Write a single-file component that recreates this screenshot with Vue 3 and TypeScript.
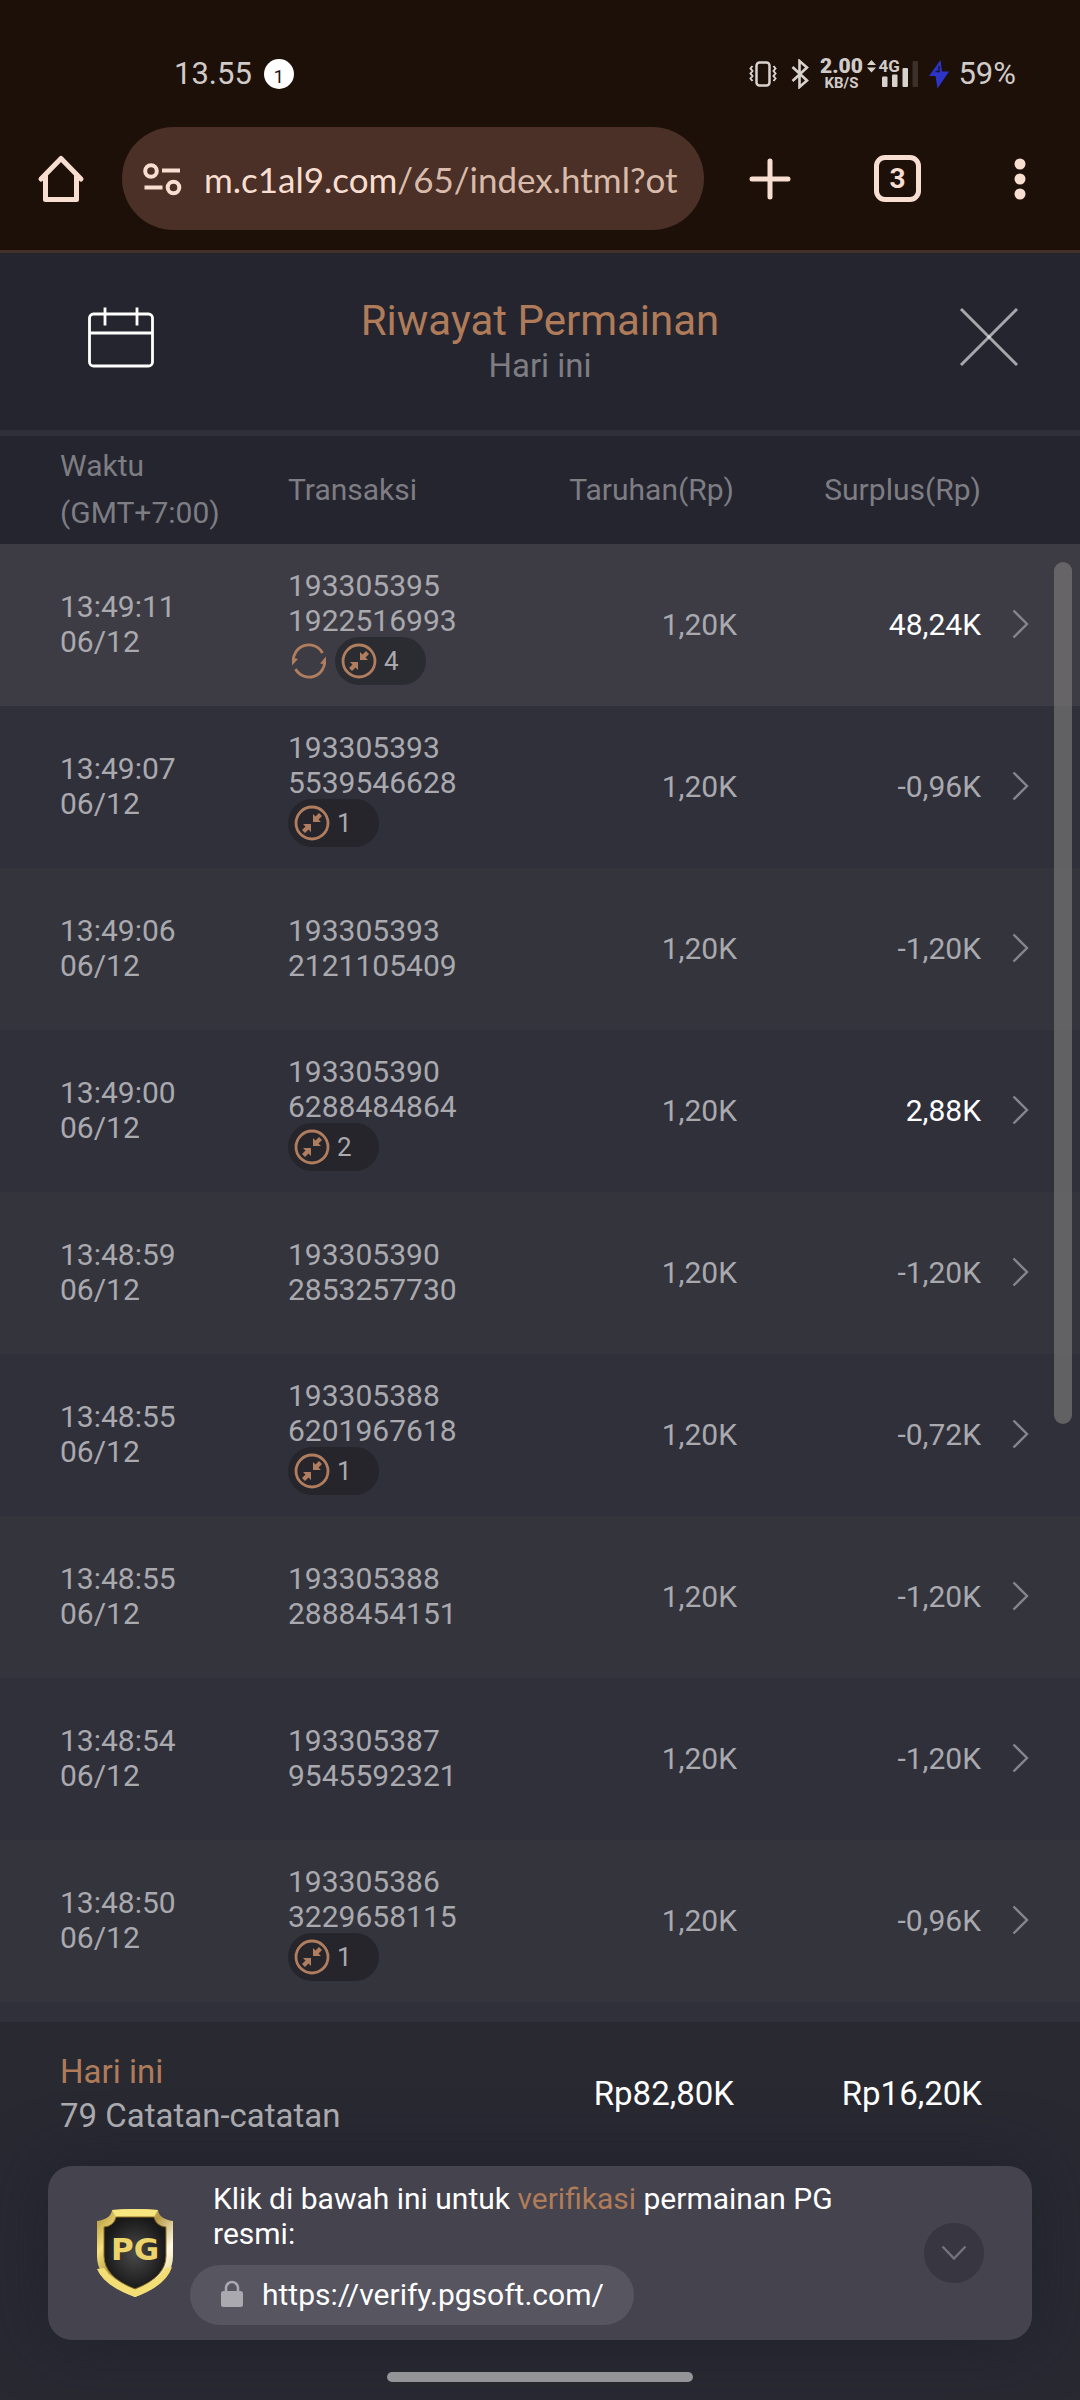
<script setup lang="ts">
interface Row {
  time: string
  date: string
  idTop: string
  idBottom: string
  bet: string
  profit: string
  win?: boolean
  freeSpin?: boolean
  collapse?: number
}

const rows: Row[] = [
  { time: '13:49:11', date: '06/12', idTop: '193305395', idBottom: '1922516993', bet: '1,20K', profit: '48,24K', win: true, freeSpin: true, collapse: 4 },
  { time: '13:49:07', date: '06/12', idTop: '193305393', idBottom: '5539546628', bet: '1,20K', profit: '-0,96K', collapse: 1 },
  { time: '13:49:06', date: '06/12', idTop: '193305393', idBottom: '2121105409', bet: '1,20K', profit: '-1,20K' },
  { time: '13:49:00', date: '06/12', idTop: '193305390', idBottom: '6288484864', bet: '1,20K', profit: '2,88K', win: true, collapse: 2 },
  { time: '13:48:59', date: '06/12', idTop: '193305390', idBottom: '2853257730', bet: '1,20K', profit: '-1,20K' },
  { time: '13:48:55', date: '06/12', idTop: '193305388', idBottom: '6201967618', bet: '1,20K', profit: '-0,72K', collapse: 1 },
  { time: '13:48:55', date: '06/12', idTop: '193305388', idBottom: '2888454151', bet: '1,20K', profit: '-1,20K' },
  { time: '13:48:54', date: '06/12', idTop: '193305387', idBottom: '9545592321', bet: '1,20K', profit: '-1,20K' },
  { time: '13:48:50', date: '06/12', idTop: '193305386', idBottom: '3229658115', bet: '1,20K', profit: '-0,96K', collapse: 1 },
]
</script>

<template>
  <div class="screen">
    <div class="status">
      <div class="status-left">
        <span>13.55</span>
        <span class="notice">1</span>
      </div>
      <div class="status-right">
        <svg class="vibrate" width="28" height="26" viewBox="0 0 28 26" fill="none" stroke="#d8d2ce">
          <rect x="7.500" y="1.500" width="13" height="23" rx="3" stroke-width="2.500" />
          <path d="M3.500 5l-2 2.500 2 2.500-2 2.500 2 2.500-2 2.500 2 2.500M24.500 5l2 2.500-2 2.500 2 2.500-2 2.500 2 2.500-2 2.500" stroke-width="2" />
        </svg>
        <svg class="bluetooth" width="18" height="30" viewBox="0 0 18 30" fill="none" stroke="#d8d2ce" stroke-width="2.600">
          <path d="M1.500 8L16 21.500 8.500 28V2L16 8.500 1.500 22" />
        </svg>
        <div class="speed"><b>2.00</b><small>KB/S</small></div>
        <div class="signal">
          <svg width="52" height="30" viewBox="0 0 52 30" fill="#d8d2ce">
            <path d="M0 6L4.500 1 9 6zM0 8.500h9L4.500 13.500z" />
            <rect x="15" y="17.500" width="5.500" height="10.500" rx="1" />
            <rect x="25" y="15.500" width="5.500" height="12.500" rx="1" />
            <rect x="35.500" y="9" width="5.500" height="19" rx="1" />
            <rect x="45.500" y="2" width="5.500" height="26" rx="1" fill="#3b302a" />
          </svg>
          <span class="net">4G</span>
        </div>
        <svg class="bolt" width="22" height="30" viewBox="0 0 22 30">
          <path d="M12.500 1L1 17h6.500L9.500 29.500 21 12.500h-7L12.500 1z" fill="#2d35c8" />
          <path d="M11 7v5.500H7.500" fill="none" stroke="#1b1536" stroke-width="1.500" />
        </svg>
        <span>59%</span>
      </div>
    </div>

    <div class="toolbar">
      <button class="plain" aria-label="Home">
        <svg width="48" height="50" viewBox="0 0 48 50" fill="none" stroke="#f8ddd1" stroke-width="5" stroke-linecap="round" stroke-linejoin="round">
          <path d="M4 25L24 4.500 44 25" /><path d="M8.500 22v23.500h31V22" />
        </svg>
      </button>
      <button class="address">
        <svg width="40" height="34" viewBox="0 0 40 34" fill="none" stroke="#f8ddd1" stroke-width="4">
          <circle cx="9" cy="9" r="5.800" /><path d="M20 8.500h18M2.500 25.500h18" /><circle cx="31.500" cy="25.500" r="5.800" />
        </svg>
        <span class="url">m.c1al9.com<span class="path">/65/index.html?ot</span></span>
      </button>
      <button class="plain plus" aria-label="New tab">
        <svg width="42" height="42" viewBox="0 0 42 42" stroke="#f8ddd1" stroke-width="5" stroke-linecap="round">
          <path d="M21 3v36M3 21h36" />
        </svg>
      </button>
      <button class="tabs">3</button>
      <button class="plain more" aria-label="More">
        <svg width="12" height="42" viewBox="0 0 12 42" fill="#f8ddd1">
          <circle cx="6" cy="6" r="5.500" /><circle cx="6" cy="21" r="5.500" /><circle cx="6" cy="36" r="5.500" />
        </svg>
      </button>
    </div>

    <header class="head">
      <button class="plain calendar" aria-label="Kalender">
        <svg width="66" height="62" viewBox="0 0 66 62" fill="none" stroke="#fff" stroke-width="2.800">
          <rect x="1.500" y="8" width="63" height="52" rx="4" />
          <path d="M1.500 27h63M17 1.500v18M49 1.500v18" />
        </svg>
      </button>
      <div class="titles">
        <h1>Riwayat Permainan</h1>
        <p>Hari ini</p>
      </div>
      <button class="plain close" aria-label="Tutup">
        <svg width="60" height="60" viewBox="0 0 60 60" fill="none" stroke="#fff" stroke-opacity=".6" stroke-width="3">
          <path d="M2 2l56 56" /><path d="M58 2L2 58" />
        </svg>
      </button>
    </header>

    <main class="list">
      <table>
        <colgroup>
          <col class="c-time"><col class="c-id"><col><col class="c-profit"><col class="c-go">
        </colgroup>
        <thead>
          <tr>
            <th class="time">Waktu<br>(GMT+7:00)</th>
            <th>Transaksi</th>
            <th class="num bet">Taruhan(Rp)</th>
            <th class="num">Surplus(Rp)</th>
            <th></th>
          </tr>
        </thead>
        <tbody>
          <tr v-for="row in rows" :key="row.idBottom">
            <td class="time">{{ row.time }}<br>{{ row.date }}</td>
            <td>
              {{ row.idTop }}<br>{{ row.idBottom }}
              <div v-if="row.collapse" class="badges">
                <svg v-if="row.freeSpin" class="spin" width="36" height="36" viewBox="0 0 36 36" fill="none" stroke="#b07d5e" stroke-width="2.800">
                  <path d="M2.500 19.500A15.500 15.500 0 0 1 31.500 10M33.500 16.500A15.500 15.500 0 0 1 4.500 26" />
                  <path d="M1 14.500v8l6-6.500zM35 21.500v-8l-6 7z" fill="#b07d5e" stroke="none" />
                </svg>
                <span class="badge">
                  <svg width="36" height="36" viewBox="0 0 36 36" fill="#b07d5e">
                    <circle cx="18" cy="18" r="16" fill="none" stroke="#b07d5e" stroke-width="2.800" />
                    <path d="M19 17v-8l2.500 2.500L25 8l3 3-3.500 3.500L27 17zM17 19v8l-2.500-2.500L11 28l-3-3 3.500-3.500L9 19z" />
                  </svg>
                  {{ row.collapse }}
                </span>
              </div>
            </td>
            <td class="num">{{ row.bet }}</td>
            <td class="num" :class="{ win: row.win }">{{ row.profit }}</td>
            <td>
              <button class="plain go" aria-label="Detail">
                <svg width="18" height="30" viewBox="0 0 18 30" fill="none" stroke="#85858b" stroke-width="2.400">
                  <path d="M1.500 1.500L15 15 1.500 28.500" />
                </svg>
              </button>
            </td>
          </tr>
        </tbody>
      </table>
      <div class="scrollbar"></div>
    </main>

    <footer class="foot">
      <div class="summary">
        <div class="records"><strong>Hari ini</strong><span>79 Catatan-catatan</span></div>
        <span class="total">Rp82,80K</span>
        <span class="total last">Rp16,20K</span>
      </div>

      <section class="verify">
        <svg class="shield" width="78" height="88" viewBox="0 0 78 88">
          <defs>
            <linearGradient id="gold" x1="0" y1="0" x2="1" y2="1">
              <stop offset="0" stop-color="#a98a35" /><stop offset=".25" stop-color="#f5e27c" />
              <stop offset=".45" stop-color="#b89a44" /><stop offset=".7" stop-color="#fffbe6" />
              <stop offset="1" stop-color="#d8bb55" />
            </linearGradient>
            <radialGradient id="dark"><stop offset="0" stop-color="#4a4a4a" /><stop offset="1" stop-color="#191919" /></radialGradient>
          </defs>
          <path d="M16 1Q39-1 62 1 63 10 77 12V47Q77 73 39 88 1 73 1 47V12Q15 10 16 1z" fill="url(#gold)" />
          <path d="M16 1Q39-1 62 1L58 8H20z" fill="#f7e57f" />
          <path d="M1 60Q8 77 39 88 70 77 76 58L69 59Q62 72 39 80 16 72 8 59z" fill="#f3de76" />
          <path d="M20 8H58Q60 17 70 18V47Q70 68 39 80 8 68 8 47V18Q18 17 20 8z" fill="url(#dark)" stroke="#8b6f24" />
          <text x="39" y="51" text-anchor="middle">PG</text>
        </svg>
        <div class="verify-body">
          <p>Klik di bawah ini untuk <em>verifikasi</em> permainan PG resmi:</p>
          <a class="link" href="https://verify.pgsoft.com/">
            <svg width="24" height="28" viewBox="0 0 24 28" fill="#aaa9b0">
              <rect x="1" y="11" width="22" height="16" rx="2.500" />
              <path d="M6 12V8a6 6 0 0 1 12 0v4" fill="none" stroke="#aaa9b0" stroke-width="2.600" />
            </svg>
            https://verify.pgsoft.com/
          </a>
        </div>
        <button class="fold" aria-label="Ciutkan">
          <svg width="26" height="16" viewBox="0 0 26 16" fill="none" stroke="#74737c" stroke-width="2.400"><path d="M1.500 1.500L13 13.500 24.500 1.500" /></svg>
        </button>
      </section>

      <div class="gesture"></div>
    </footer>
  </div>
</template>

<style>
body {
  background: #292932;
}
</style>

<style scoped>
.screen {
  min-height: 100vh;
  display: flex;
  flex-direction: column;
  background: #30303b;
  color: #a9a9ae;
  font: 30px/35px Roboto, sans-serif;
}
.screen * {
  box-sizing: border-box;
}
svg {
  display: block;
  flex: none;
}
button {
  font: inherit;
  color: inherit;
  border: 0;
  padding: 0;
}
.plain {
  background: none;
}
h1,
p {
  margin: 0;
  font-weight: 400;
}

.status {
  display: flex;
  justify-content: space-between;
  align-items: center;
  height: 127px;
  padding: 20px 64px 0 174px;
  background: #1d1009;
  color: #d0cbc8;
  font-size: 31px;
}
.status-left,
.status-right {
  display: flex;
  align-items: center;
}
.notice {
  display: grid;
  place-items: center;
  width: 30px;
  height: 30px;
  margin-left: 12px;
  border-radius: 50%;
  background: #fff;
  color: #1d1009;
  font-size: 18px;
}
.bluetooth {
  margin-left: 14px;
}
.speed {
  display: flex;
  flex-direction: column;
  align-items: center;
  width: 44px;
  margin-left: 10px;
  font-weight: 700;
}
.speed b {
  font-size: 21px;
  line-height: 18px;
}
.speed small {
  font-size: 15px;
  line-height: 16px;
}
.signal {
  position: relative;
  margin-left: 4px;
}
.net {
  position: absolute;
  left: 11px;
  top: 0;
  font-size: 17px;
  font-weight: 700;
  line-height: 15px;
}
.bolt {
  margin: 0 8px 0 9px;
}

.toolbar {
  display: flex;
  align-items: center;
  height: 126px;
  padding: 0 54px 20px 37px;
  background: #1d1009;
  border-bottom: 3px solid #43312a;
}
.address {
  display: flex;
  flex: 1;
  align-items: center;
  gap: 22px;
  min-width: 0;
  height: 103px;
  margin-left: 37px;
  padding: 0 20px;
  border-radius: 52px;
  background: #4a3026;
}
.url {
  overflow: hidden;
  white-space: nowrap;
  color: #f8ddd1;
  font: 35px/48px Lato, sans-serif;
}
.path {
  color: #d9bbab;
}
.plus {
  margin-left: 45px;
}
.tabs {
  width: 47px;
  height: 47px;
  margin-left: 83px;
  border: 5px solid #f8ddd1;
  border-radius: 11px;
  background: none;
  color: #f8ddd1;
  font-size: 28px;
  font-weight: 700;
  line-height: 37px;
}
.more {
  margin-left: 93px;
}

.head {
  display: grid;
  grid-template-columns: 1fr auto 1fr;
  align-items: center;
  height: 183px;
  padding: 0 61px 10px;
  background: #25252f;
  border-bottom: 6px solid #30303b;
}
.calendar {
  justify-self: start;
  margin-left: 27px;
}
.close {
  justify-self: end;
}
.titles {
  padding-top: 8px;
  text-align: center;
}
.titles h1 {
  color: #b07b59;
  font-size: 42px;
  line-height: 50px;
}
.titles p {
  color: #7d7d83;
  font-size: 33px;
  line-height: 40px;
}

.list {
  position: relative;
  flex: 1;
  padding-bottom: 20px;
}
table {
  width: 100%;
  table-layout: fixed;
  border-collapse: collapse;
}
.c-time {
  width: 288px;
}
.c-id {
  width: 216px;
}
.c-profit {
  width: 244px;
}
.c-go {
  width: 99px;
}
th,
td {
  padding: 0 0 2px;
  text-align: left;
  vertical-align: middle;
  font-weight: 400;
}
thead tr {
  height: 108px;
  background: #25252f;
  color: #7d7d83;
}
th {
  line-height: 47px;
}
.time {
  padding-left: 60px;
}
.num {
  text-align: right;
}
.bet {
  padding-right: 3px;
}
tbody tr {
  height: 162px;
  background: #34343d;
}
tbody tr:nth-child(even) {
  background: #30303b;
}
tbody tr:first-child {
  background: #3d3c45;
}
.win {
  color: #fff;
}
.go {
  display: block;
  margin-left: 31px;
}
.badges {
  display: flex;
  align-items: center;
  margin: -1px 0 -5px;
}
.spin {
  margin: 0 8px 0 3px;
}
.badge {
  display: flex;
  align-items: center;
  gap: 7px;
  width: 91px;
  height: 48px;
  padding-left: 6px;
  border-radius: 24px;
  background: #25252b;
  font-size: 26px;
}
tbody tr:first-child .badge {
  background: #2b2b32;
}
.scrollbar {
  position: absolute;
  top: 126px;
  right: 8px;
  width: 18px;
  height: 862px;
  border-radius: 9px;
  background: rgba(128, 126, 122, 0.62);
}

.foot {
  background: #292932;
  overflow: hidden;
}
.summary {
  display: flex;
  align-items: center;
  padding: 28px 98px 28px 60px;
  font-size: 33px;
  line-height: 44px;
}
.records {
  display: flex;
  flex: 1;
  flex-direction: column;
}
.records strong {
  color: #b07b59;
  font-weight: 400;
}
.total {
  color: #fff;
}
.last {
  width: 248px;
  text-align: right;
}
.verify {
  display: flex;
  align-items: center;
  height: 174px;
  margin: 0 48px;
  padding: 0 48px;
  border-radius: 24px;
  background: #44434e;
  box-shadow: 0 0 64px rgba(28, 28, 38, 0.6);
  color: #fff;
}
.shield text {
  fill: #ecd46a;
  font: 700 31px 'DejaVu Sans', sans-serif;
}
.verify-body {
  flex: 1;
  padding-left: 16px;
}
.verify-body p {
  max-width: 680px;
  margin: 0 0 14px 23px;
}
.verify-body em {
  color: #b07b59;
  font-style: normal;
}
.link {
  display: inline-flex;
  align-items: center;
  gap: 18px;
  height: 60px;
  padding: 0 30px 2px;
  border-radius: 30px;
  background: #565560;
  color: #fff;
  text-decoration: none;
  vertical-align: top;
}
.fold {
  display: grid;
  place-items: center;
  width: 60px;
  height: 60px;
  border-radius: 50%;
  background: #373641;
}
.gesture {
  width: 306px;
  height: 10px;
  margin: 32px auto 18px;
  border-radius: 5px;
  background: #949499;
}
</style>
